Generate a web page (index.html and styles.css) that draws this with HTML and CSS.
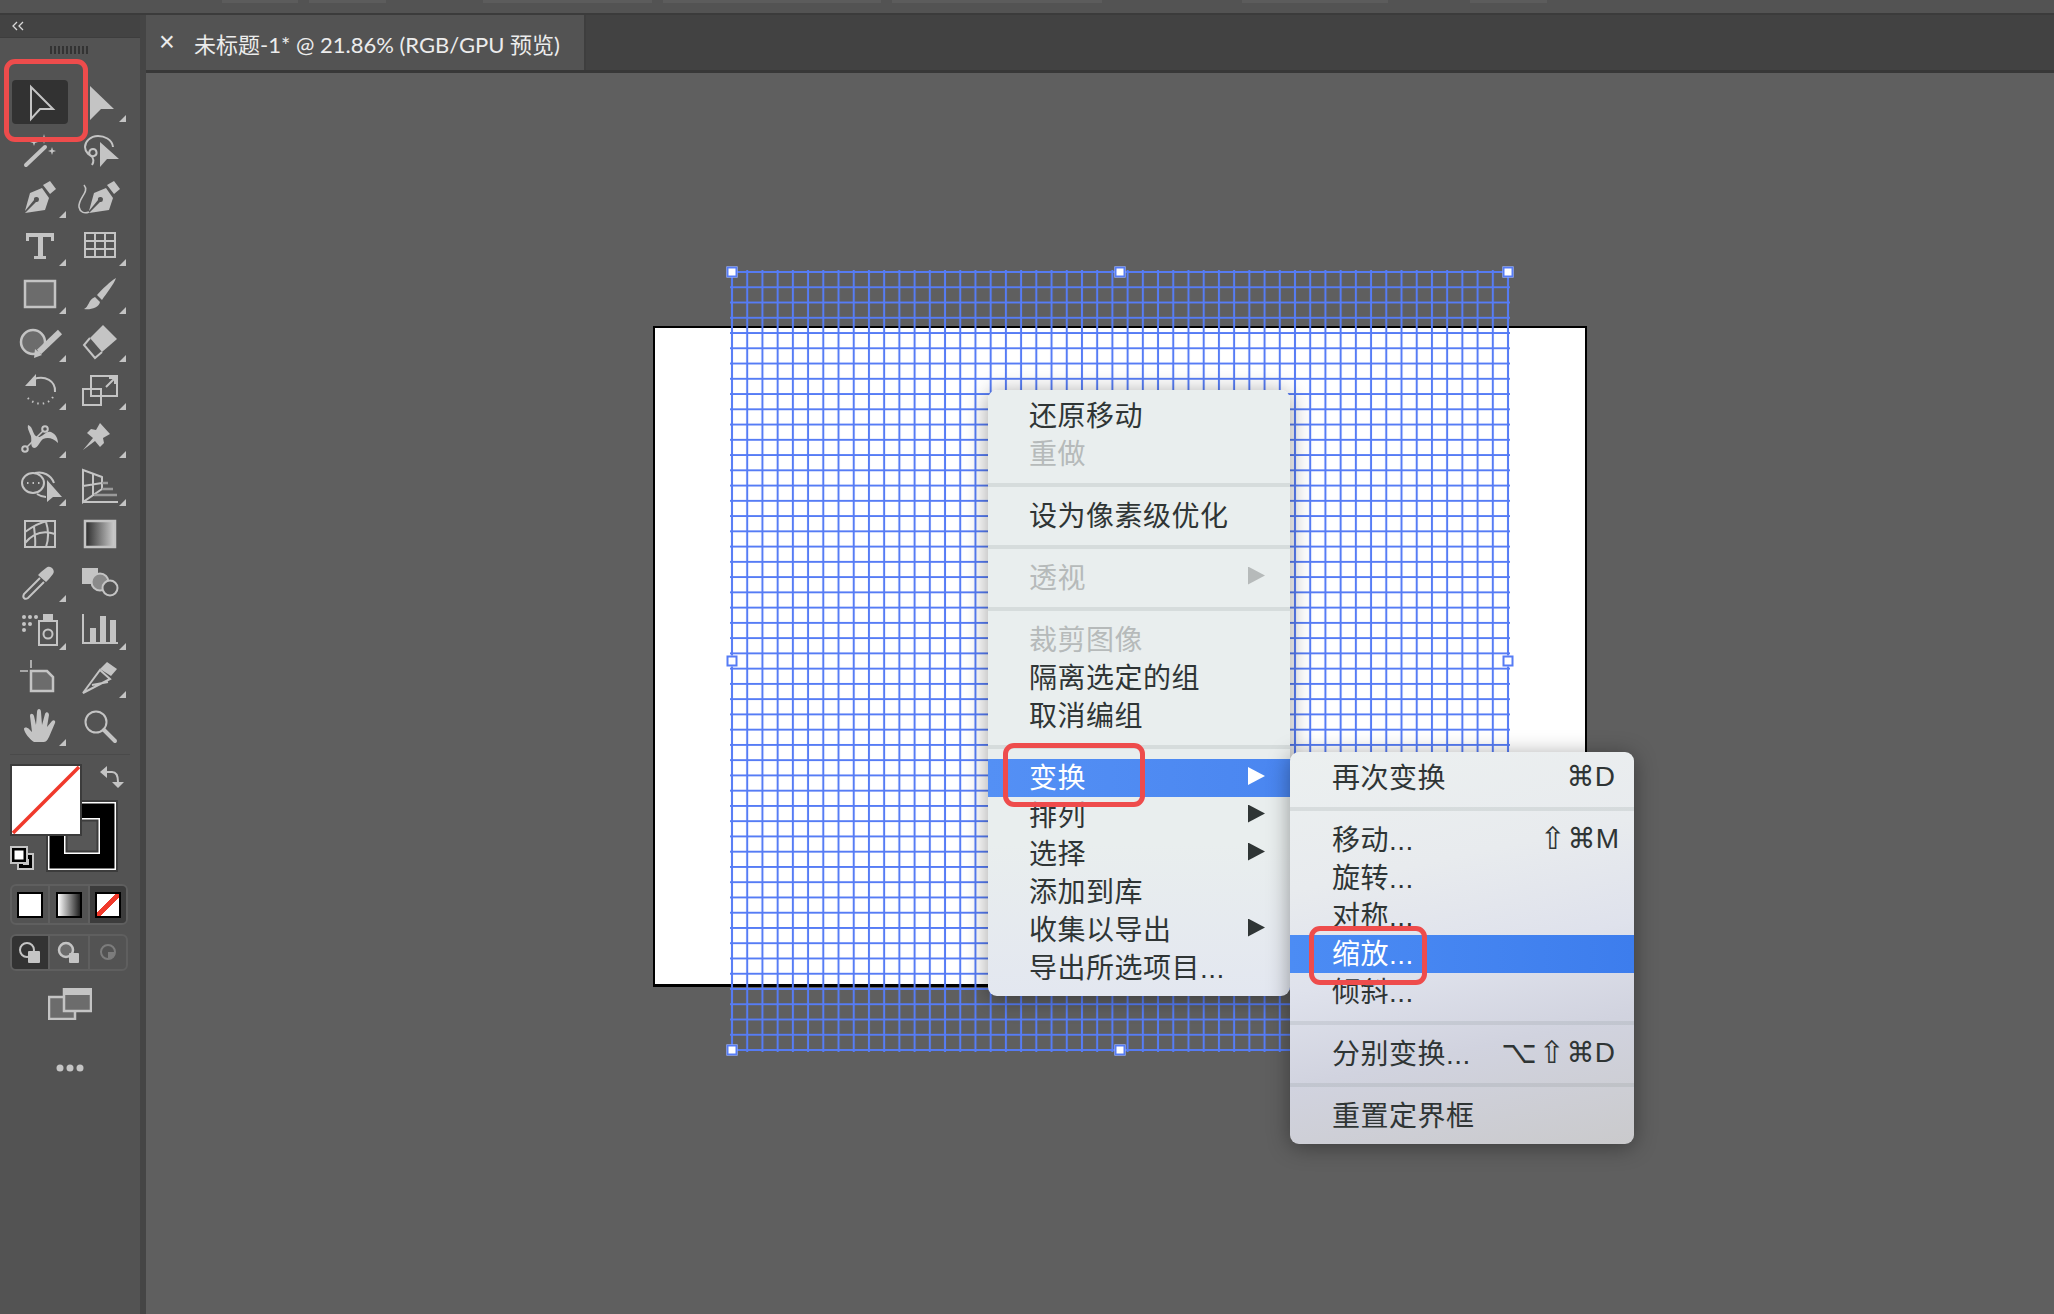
FILE: index.html
```html
<!DOCTYPE html>
<html lang="zh-CN">
<head>
  <meta charset="UTF-8">
  <meta name="viewport" content="width=device-width, initial-scale=1.0">
  <title>未标题-1 @ 21.86%</title>
  <link rel="stylesheet" href="styles.css">
</head>
<body>
  <div class="topbar"></div>
  <div class="main">

    <!-- tools panel -->
    <aside class="panel">
      <div class="panel-head">
        <svg class="chevrons" viewBox="0 0 14 10"><path d="M6 1 2 5l4 4M12 1 8 5l4 4"/></svg>
      </div>
      <div class="grip"></div>
      <div class="tools">
        <!-- selection -->
        <div class="tool"><svg viewBox="0 0 60 48"><rect class="active" x="2" y="2" width="56" height="44" rx="4"/><path class="line" d="M21 9 43 31H30L21 41Z"/></svg></div>
        <div class="tool more"><svg viewBox="0 0 60 48"><path class="solid" d="M20 8 44 31H31L20 42Z"/></svg></div>
        <!-- wand, lasso -->
        <div class="tool"><svg viewBox="0 0 60 48"><path class="line thick" d="M16 39 35 21"/><path class="solid" d="M42 21l1 3 3 1-3 1-1 3-1-3-3-1 3-1zM34 8l1 4 3 1-3 1-1 4-1-4-3-1 3-1zM24 12l1 3 3 1-3 1-1 3-1-3-3-1 3-1z"/></svg></div>
        <div class="tool"><svg viewBox="0 0 60 48"><path class="line" d="M43 21C42 13 34 10 28 10 20 10 15 16 15 21c0 5 5 10 9 9 4-1 3-7-1-7-4 0-5 5-2 7 3 2 3 6 1 9"/><path class="solid" d="M30 16 49 33H37L30 41Z"/></svg></div>
        <!-- pen, curvature -->
        <div class="tool more"><svg viewBox="0 0 60 48"><path class="solid" d="M33 11 40 7 46 15 40 20ZM20 19 32 14 39 24 35 36 15 39 26 28a2.500 2.500 0 1 0-2-2L15 37Z"/></svg></div>
        <div class="tool"><svg viewBox="0 0 60 48"><path class="solid" d="M37 11 44 7 50 15 44 20ZM24 19 36 14 43 24 39 36 19 39 30 28a2.500 2.500 0 1 0-2-2L19 37Z"/><path class="line thin" d="M14 11c6 7-6 13-5 22 1 5 5 7 10 5"/></svg></div>
        <!-- type, table -->
        <div class="tool more"><svg viewBox="0 0 60 48"><path class="solid" d="M16 11H44V19H41V15H33V34H36V37H24V34H28V15H19V19H16Z"/></svg></div>
        <div class="tool more"><svg viewBox="0 0 60 48"><path class="line" d="M15 11H45V35H15ZM25 11V35M35 11V35M15 19H45M15 27H45"/></svg></div>
        <!-- rectangle, brush -->
        <div class="tool more"><svg viewBox="0 0 60 48"><rect class="box" x="15" y="11" width="30" height="26"/></svg></div>
        <div class="tool more"><svg viewBox="0 0 60 48"><path class="solid" d="M46 8C44 14 36 24 32 30L27 25C32 19 41 11 46 8ZM25 27 30 32C29 38 20 40 14 39 19 37 18 30 25 27Z"/></svg></div>
        <!-- shaper, eraser -->
        <div class="tool more"><svg viewBox="0 0 60 48"><circle class="box" cx="23" cy="24" r="12"/><path class="line wide" d="M50 14 29 34"/><path class="solid" d="M25 31 32 37 24 40Z"/></svg></div>
        <div class="tool more"><svg viewBox="0 0 60 48"><path class="solid" d="M33 7 47 21 32 34 20 20Z"/><path class="line" d="M20 20 14 27 25 40 32 34"/></svg></div>
        <!-- rotate, scale -->
        <div class="tool more"><svg viewBox="0 0 60 48"><path class="line" d="M24 13c11-4 22 2 21 13"/><path class="solid" d="M15 20 26 8V20Z"/><path class="line dotted" d="M43 31c-6 9-19 9-27-1"/></svg></div>
        <div class="tool more"><svg viewBox="0 0 60 48"><path class="line" d="M21 10H47V30H21ZM13 23H31V39H13ZM36 21 44 13M39 12H45V18"/></svg></div>
        <!-- width, pin -->
        <div class="tool more"><svg viewBox="0 0 60 48"><path class="solid" d="M18 11c6 2 4 11 10 12 5 0 8-7 13-5 5 2 7 7 7 11-5-5-10-6-15-4-3 2-5 9-9 9-5-1-1-10-4-14-1-3-3-6-2-9Z"/><path class="line thin" d="M15 35 35 15"/><circle class="knob" cx="15" cy="35" r="2.800"/><circle class="knob" cx="35" cy="15" r="2.800"/></svg></div>
        <div class="tool more"><svg viewBox="0 0 60 48"><path class="solid" d="M13 36 23 24 17 19 21 15 26 16 30 9 40 20 33 24 34 29 30 33 25 27Z"/></svg></div>
        <!-- shape builder, perspective -->
        <div class="tool more"><svg viewBox="0 0 60 48"><ellipse class="line" cx="23" cy="21" rx="11" ry="10"/><path class="line" d="M25 11c8-2 16 2 19 10M27 32c3 2 6 3 9 3"/><path class="line dotted" d="M17 21H34"/><path class="solid" d="M37 18 52 35H43L37 40Z"/></svg></div>
        <div class="tool more"><svg viewBox="0 0 60 48"><path class="line" d="M13 8V40L32 27V15ZM13 8 32 15M13 24 32 21M23 11V34M13 40H48"/><path class="line faint" d="M32 21H38M32 27H43M24 33H47"/></svg></div>
        <!-- mesh, gradient -->
        <div class="tool"><svg viewBox="0 0 60 48"><path class="line" d="M15 11H45V37H15ZM15 22C26 14 32 12 38 11M15 33C24 22 34 20 45 24M25 37C26 28 24 20 24 16M36 37C39 28 38 18 36 12"/></svg></div>
        <div class="tool"><svg viewBox="0 0 60 48"><defs><linearGradient id="ramp"><stop offset="0" stop-color="#2a2a2a"/><stop offset="1" stop-color="#d0d0d0"/></linearGradient></defs><rect x="15" y="11" width="30" height="26" fill="url(#ramp)" stroke="#c4c4c4" stroke-width="2.500"/></svg></div>
        <!-- eyedropper, blend -->
        <div class="tool more"><svg viewBox="0 0 60 48"><path class="line" d="M30 20 14 36C12 40 15 42 18 40L34 24"/><path class="solid" d="M28 17 31 14 36 10C40 6 46 12 43 16L39 21 36 24Z"/></svg></div>
        <div class="tool"><svg viewBox="0 0 60 48"><rect class="solid" x="12" y="10" width="16" height="16"/><circle class="grey" cx="30" cy="24" r="8.500"/><circle class="knob" cx="40" cy="30" r="7.500"/></svg></div>
        <!-- spray, graph -->
        <div class="tool more"><svg viewBox="0 0 60 48"><path class="solid" d="M33 8H43V15H33Z"/><rect class="line" x="29" y="15" width="18" height="24"/><circle class="line" cx="38" cy="28" r="4.500"/><g class="solid"><circle cx="14" cy="11" r="2"/><circle cx="20" cy="11" r="2"/><circle cx="26" cy="11" r="2"/><circle cx="14" cy="18" r="2"/><circle cx="20" cy="18" r="2"/><circle cx="14" cy="24" r="2"/></g></svg></div>
        <div class="tool more"><svg viewBox="0 0 60 48"><path class="line" d="M13 8V37H48"/><path class="solid" d="M20 22H26V37H20ZM30 10H36V37H30ZM40 14H46V37H40Z"/></svg></div>
        <!-- artboard, slice -->
        <div class="tool"><svg viewBox="0 0 60 48"><path class="box" d="M21 17H37L43 23V37H21Z"/><path class="line thin" d="M10 17H18M21 6V14"/></svg></div>
        <div class="tool more"><svg viewBox="0 0 60 48"><path class="line" d="M13 39 30 16 40 25ZM22 31 38 28"/><path class="solid" d="M30 15 37 8 47 15 41 22Z"/></svg></div>
        <!-- hand, zoom -->
        <div class="tool more"><svg viewBox="0 0 60 48"><path class="solid" d="M24 40C20 38 14 30 14 27 14 25 17 25 19 27L22 30 20 14C20 11 23 11 24 14L26 23 27 10C27 6 31 6 31 10L32 23 35 12C36 9 39 10 39 13L37 25 42 19C44 17 46 19 45 21L39 35C37 39 36 40 33 40Z"/></svg></div>
        <div class="tool"><svg viewBox="0 0 60 48"><circle class="line" cx="26" cy="20" r="10.500"/><path class="line thick" d="M34 28 45 39"/></svg></div>
      </div>
      <div class="panel-rule"></div>

      <!-- fill and stroke -->
      <svg class="colors" viewBox="0 0 118 108">
        <rect x="36" y="36" width="72" height="72" fill="#3c3c3c"/>
        <rect x="38" y="38" width="68" height="68" fill="#fff"/>
        <rect x="39.500" y="39.500" width="65" height="65" fill="#000"/>
        <rect x="54" y="54" width="36" height="36" fill="#fff"/>
        <rect x="55.500" y="55.500" width="33" height="33" fill="#3c3c3c"/>
        <rect x="57.500" y="57.500" width="29" height="29" fill="#575757"/>
        <rect x="1" y="1" width="70" height="70" fill="#fff" stroke="#3c3c3c" stroke-width="2"/>
        <path d="M3 69 69 3" stroke="#f0392b" stroke-width="3.500"/>
        <path class="line" d="M96 8H102C106 8 108 12 108 18"/>
        <path class="solid" d="M90 8 97 2V14ZM102 18H114L108 24Z"/>
        <rect x="7" y="89" width="17" height="17" fill="#c4c4c4"/>
        <rect x="9" y="91" width="13" height="13" fill="#000"/>
        <rect x="13" y="95" width="6" height="6" fill="#c4c4c4"/>
        <rect x="0" y="82" width="18" height="18" fill="#c4c4c4"/>
        <rect x="2" y="84" width="14" height="14" fill="#000"/>
        <rect x="4.500" y="86.500" width="9" height="9" fill="#fff"/>
      </svg>

      <div class="segments swatches">
        <div class="seg"><span class="swatch"></span></div>
        <div class="seg"><span class="swatch gradient"></span></div>
        <div class="seg on"><span class="swatch none"></span></div>
      </div>

      <div class="segments modes">
        <div class="seg dark"><svg viewBox="0 0 36 33"><circle class="line" cx="15" cy="14" r="7"/><rect class="solid" x="16" y="15" width="12" height="12" rx="1"/></svg></div>
        <div class="seg"><svg viewBox="0 0 36 33"><circle class="box" cx="15" cy="14" r="7"/><rect class="solid" x="18" y="17" width="10" height="10" rx="1"/></svg></div>
        <div class="seg"><svg viewBox="0 0 36 33"><circle class="mute" cx="18" cy="16" r="7"/><path class="mute-fill" d="M18 16H25C25 20 22 23 18 23Z"/></svg></div>
      </div>

      <svg class="screen-mode" viewBox="0 0 44 32"><rect class="box" x="1" y="9" width="26" height="22"/><rect class="box" x="16" y="1" width="27" height="22"/><rect class="solid" x="16" y="1" width="27" height="6"/></svg>
      <svg class="more-dots" viewBox="0 0 28 8"><circle class="solid" cx="4" cy="4" r="3.500"/><circle class="solid" cx="14" cy="4" r="3.500"/><circle class="solid" cx="24" cy="4" r="3.500"/></svg>

      <div class="callout callout-tool"></div>
    </aside>

    <div class="work">
      <div class="tabbar">
        <div class="tab"><span class="tab-close">×</span><span class="tab-title">未标题-1* @ 21.86% (RGB/GPU 预览)</span></div>
      </div>

      <div class="canvas">
        <div class="artboard"></div>

        <svg class="mesh" viewBox="0 0 776 778">
          <defs>
            <pattern id="cells" x="-7.608" y="-7.627" width="15.216" height="15.255" patternUnits="userSpaceOnUse">
              <path d="M0 7.627H15.216M7.608 0V15.255" stroke="#567cf5" stroke-width="2" fill="none"/>
            </pattern>
          </defs>
          <rect x="-2" y="-2" width="780" height="782" fill="url(#cells)"/>
        </svg>
        <span class="handle h-tl"></span>
        <span class="handle h-tc"></span>
        <span class="handle h-tr"></span>
        <span class="handle h-ml"></span>
        <span class="handle h-mr"></span>
        <span class="handle h-bl"></span>
        <span class="handle h-bc"></span>

        <div class="menu context-menu">
          <div class="item">还原移动</div>
          <div class="item off">重做</div>
          <div class="sep"></div>
          <div class="item">设为像素级优化</div>
          <div class="sep"></div>
          <div class="item off">透视<i class="arrow"></i></div>
          <div class="sep"></div>
          <div class="item off">裁剪图像</div>
          <div class="item">隔离选定的组</div>
          <div class="item">取消编组</div>
          <div class="sep"></div>
          <div class="item hot">变换<i class="arrow"></i></div>
          <div class="item">排列<i class="arrow"></i></div>
          <div class="item">选择<i class="arrow"></i></div>
          <div class="item">添加到库</div>
          <div class="item">收集以导出<i class="arrow"></i></div>
          <div class="item">导出所选项目...</div>
        </div>

        <div class="menu sub-menu">
          <div class="item">再次变换<span class="keys">⌘D</span></div>
          <div class="sep"></div>
          <div class="item">移动...<span class="keys wide-keys"><span class="key-big">⇧</span>⌘M</span></div>
          <div class="item">旋转...</div>
          <div class="item">对称...</div>
          <div class="item hot">缩放...</div>
          <div class="item">倾斜...</div>
          <div class="sep"></div>
          <div class="item">分别变换...<span class="keys"><span class="key-big">⌥</span><span class="key-big">⇧</span>⌘D</span></div>
          <div class="sep"></div>
          <div class="item">重置定界框</div>
        </div>

        <div class="callout callout-transform"></div>
        <div class="callout callout-scale"></div>
      </div>
    </div>
  </div>
</body>
</html>
```

FILE: styles.css
```css
html, body {
  height: 100%;
}

body {
  margin: 0;
  display: flex;
  flex-direction: column;
  overflow: hidden;
  background: #5f5f5f;
  font-family: "Liberation Sans", "Noto Sans CJK SC", sans-serif;
}

/* the cut-off app bar at the very top */
.topbar {
  height: 13px;
  border-bottom: 2px solid #3b3b3b;
  background-color: #535353;
  background-image:
    linear-gradient(#5c5c5c, #5c5c5c), linear-gradient(#5c5c5c, #5c5c5c),
    linear-gradient(#5c5c5c, #5c5c5c), linear-gradient(#5c5c5c, #5c5c5c),
    linear-gradient(#5c5c5c, #5c5c5c), linear-gradient(#5c5c5c, #5c5c5c),
    linear-gradient(#5c5c5c, #5c5c5c);
  background-size: 76px 3px, 77px 3px, 169px 3px, 218px 3px, 210px 3px, 146px 3px, 77px 3px;
  background-position: 222px 0, 309px 0, 483px 0, 663px 0, 892px 0, 1242px 0, 1470px 0;
  background-repeat: no-repeat;
}

.main {
  flex: 1;
  display: flex;
  min-height: 0;
}

/* tools panel */
.panel {
  position: relative;
  width: 140px;
  flex-shrink: 0;
  display: flex;
  flex-direction: column;
  background: #535353;
  border-right: 6px solid #454545;
}

.panel-head {
  height: 23px;
  display: flex;
  align-items: center;
  padding-left: 11px;
  background: #434343;
  border-bottom: 1px solid #3d3d3d;
  box-sizing: border-box;
}

.chevrons {
  width: 14px;
  height: 10px;
  fill: none;
  stroke: #d8d8d8;
  stroke-width: 1.3;
}

.grip {
  width: 38px;
  height: 8px;
  margin: 8px 0 24px 50px;
  background: repeating-linear-gradient(90deg, #333 0 2px, transparent 2px 4px);
}

.tools {
  display: grid;
  grid-template-columns: 60px 60px;
  grid-auto-rows: 48px;
  margin-left: 10px;
}

.tool {
  position: relative;
}

.tool svg {
  display: block;
  width: 60px;
  height: 48px;
}

.tool.more::after {
  content: "";
  position: absolute;
  right: 4px;
  bottom: 4px;
  width: 7px;
  height: 7px;
  background: #c4c4c4;
  clip-path: polygon(100% 0, 100% 100%, 0 100%);
}

/* icon paint */
.active { fill: #323232; }
.solid { fill: #c4c4c4; }
.line { fill: none; stroke: #c4c4c4; stroke-width: 2; }
.line.thin { stroke-width: 1.6; }
.line.thick { stroke-width: 4; stroke-linecap: round; }
.line.wide { stroke-width: 6; }
.line.dotted { stroke-width: 2; stroke-dasharray: 1.5 4; }
.line.faint { stroke: #9a9a9a; stroke-width: 2.5; }
.box { fill: #6c6c6c; stroke: #c4c4c4; stroke-width: 2.5; }
.grey { fill: #8a8a8a; stroke: #c4c4c4; stroke-width: 2; }
.knob { fill: #535353; stroke: #c4c4c4; stroke-width: 2; }
.mute { fill: none; stroke: #7c7c7c; stroke-width: 2; }
.mute-fill { fill: #7c7c7c; }

.panel-rule {
  height: 1px;
  margin: 4px 10px 9px;
  background: #4a4a4a;
}

.colors {
  display: block;
  width: 118px;
  height: 108px;
  margin-left: 10px;
}

.segments {
  display: grid;
  grid-template-columns: 36px 40px 1fr;
  width: 118px;
  margin-left: 10px;
  box-sizing: border-box;
  border: 2px solid #5f5f5f;
  border-radius: 6px;
  overflow: hidden;
}

.swatches {
  height: 41px;
  margin-top: 12px;
}

.modes {
  height: 37px;
  margin-top: 9px;
}

.seg {
  display: flex;
  align-items: center;
  justify-content: center;
  border-left: 2px solid #5f5f5f;
}

.seg:first-child {
  border-left: none;
}

.seg.on {
  background: #3c3c3c;
}

.seg.dark {
  background: #333;
}

.seg svg {
  width: 36px;
  height: 33px;
}

.swatch {
  width: 26px;
  height: 26px;
  box-sizing: border-box;
  border: 2px solid #000;
  background: #fff;
}

.swatch.gradient {
  background: linear-gradient(90deg, #fff, #1f1f1f);
}

.swatch.none {
  background: linear-gradient(to top left, #fff 0 42%, #f0392b 42% 58%, #fff 58%);
}

.screen-mode {
  display: block;
  width: 44px;
  height: 32px;
  margin: 17px 0 0 48px;
}

.more-dots {
  display: block;
  width: 28px;
  height: 8px;
  margin: 44px 0 0 56px;
}

/* tab strip */
.work {
  flex: 1;
  min-width: 0;
  display: flex;
  flex-direction: column;
}

.tabbar {
  height: 58px;
  display: flex;
  box-sizing: border-box;
  background: #424242;
  border-bottom: 3px solid #383838;
}

.tab {
  width: 440px;
  display: flex;
  align-items: center;
  box-sizing: border-box;
  padding-left: 13px;
  background: #535353;
  border-right: 2px solid #3e3e3e;
  color: #ececec;
}

.tab-close {
  width: 35px;
  font-size: 27px;
  line-height: 1;
}

.tab-title {
  font-family: "Lato", "Noto Sans CJK SC", sans-serif;
  font-size: 22px;
  white-space: nowrap;
}

.canvas {
  position: relative;
  flex: 1;
  background: #5f5f5f;
}

.artboard {
  position: absolute;
  left: 507px;
  top: 253px;
  width: 934px;
  height: 661px;
  box-sizing: border-box;
  background: #fff;
  border: 2px solid #000;
  border-bottom-width: 3px;
}

.mesh {
  position: absolute;
  left: 586px;
  top: 199px;
  width: 776px;
  height: 778px;
  overflow: visible;
}

.handle {
  position: absolute;
  width: 7px;
  height: 7px;
  background: #fff;
  border: 2px solid #567cf5;
  transform: translate(-50%, -50%);
}

.h-tl { left: 586px; top: 199px; }
.h-tc { left: 974px; top: 199px; }
.h-tr { left: 1362px; top: 199px; }
.h-ml { left: 586px; top: 588px; }
.h-mr { left: 1362px; top: 588px; }
.h-bl { left: 586px; top: 977px; }
.h-bc { left: 974px; top: 977px; }

/* menus */
.menu {
  position: absolute;
  box-sizing: border-box;
  padding: 7px 0 9px;
  border-radius: 9px;
  box-shadow: 0 3px 22px rgba(0, 0, 0, 0.38);
  color: #2f3535;
  font-size: 28px;
  letter-spacing: 0.5px;
}

.context-menu {
  left: 842px;
  top: 317px;
  width: 302px;
  background: linear-gradient(#e9eeee 0 75%, #e3e7f0);
}

.sub-menu {
  left: 1144px;
  top: 679px;
  width: 344px;
  background: linear-gradient(168deg, #ecf0f0 0, #e8ebee 30%, #dfe2ec 52%, #d1d3df 72%, #cacacc 100%);
}

.item {
  height: 38px;
  display: flex;
  align-items: center;
  justify-content: space-between;
  box-sizing: border-box;
  padding: 0 25px 5px 41px;
  white-space: nowrap;
}

.sub-menu .item {
  padding: 0 19px 5px 42px;
}

.item.off {
  color: #b6baba;
}

.item.hot {
  color: #fff;
  background: linear-gradient(90deg, #5490f5, #4a86f0);
  padding-bottom: 4px;
}

.sub-menu .item.hot {
  background: linear-gradient(90deg, #4c8cf4, #3d7ded);
  padding-bottom: 4px;
}

.sep {
  height: 4px;
  margin: 10px 0;
  background: rgba(120, 130, 130, 0.16);
}

.arrow {
  width: 17px;
  height: 18px;
  background: currentColor;
  clip-path: polygon(0 0, 100% 50%, 0 100%);
}

.keys {
  display: flex;
  align-items: center;
  margin-top: 2px;
  font-family: "Liberation Sans", "DejaVu Sans", sans-serif;
  font-size: 28px;
  letter-spacing: 0;
}

.key-big {
  font-size: 31px;
  line-height: 1;
  margin-right: 2px;
}

.wide-keys {
  margin-right: -4px;
}

/* red annotations drawn on the screenshot */
.callout {
  position: absolute;
  box-sizing: border-box;
  border: 5px solid #ee4c4c;
  border-radius: 11px;
}

.callout-tool {
  left: 4px;
  top: 44px;
  width: 84px;
  height: 83px;
}

.callout-transform {
  left: 857px;
  top: 670px;
  width: 142px;
  height: 64px;
}

.callout-scale {
  left: 1163px;
  top: 853px;
  width: 118px;
  height: 59px;
}
```
